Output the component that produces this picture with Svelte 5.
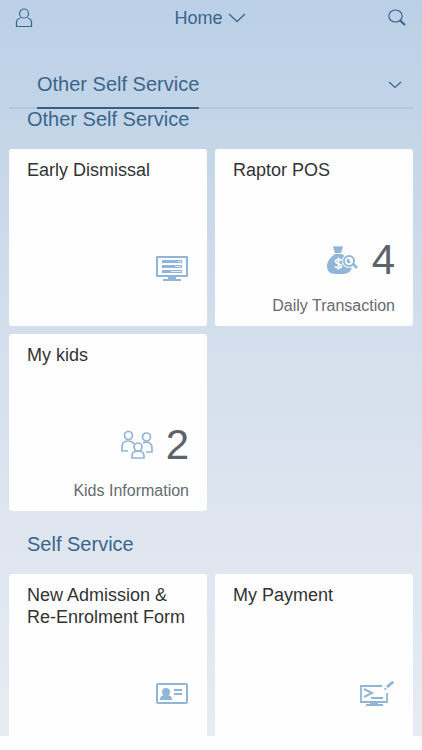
<script>
  const groups = [
    {
      title: 'Other Self Service',
      tiles: [
        { title: 'Early Dismissal', icon: 'monitor' },
        { title: 'Raptor POS', icon: 'money', count: 4, footer: 'Daily Transaction' },
        { title: 'My kids', icon: 'group', count: 2, footer: 'Kids Information' }
      ]
    },
    {
      title: 'Self Service',
      tiles: [
        { title: 'New Admission & Re-Enrolment Form', icon: 'card' },
        { title: 'My Payment', icon: 'terminal' }
      ]
    }
  ];
</script>

{#snippet icon(name)}
  {#if name === 'monitor'}
    <svg class="icon" width="34" height="28" viewBox="0 0 34 28" aria-hidden="true">
      <rect x="2" y="2" width="30" height="19" fill="none" stroke="currentColor" stroke-width="2" />
      <path d="M7 5h20v3H7zM7 10h20v3H7zM7 15h20v3H7zM13 22h8v2h5v2H8v-2h5z" fill="currentColor" />
      <path d="M23 6.5h3M20 11.500h6M16 16.500h10" stroke="#e4eef7" stroke-width="1" />
    </svg>
  {:else if name === 'money'}
    <svg class="icon" width="34" height="30" viewBox="0 0 34 30" aria-hidden="true">
      <path d="M8 1q2 1 4 0 2 1 4 0l1 1-2 6H9L7 2zM9 9h7c4 3 10 7 10 12 0 5-4 8-9 8H9c-5 0-8-3-8-8 0-5 4-9 8-12z" fill="currentColor" />
      <path d="M15.500 15.500c-1-1.500-6-1.500-6 1 0 3 6 1.500 6 4.500 0 2.500-5 2.500-6.500.5M12.500 12.500v12" fill="none" stroke="#fff" stroke-width="1.700" />
      <circle cx="23" cy="16" r="7" fill="#fff" />
      <circle cx="23" cy="16" r="5" fill="#fff" stroke="currentColor" stroke-width="2" />
      <path d="M27 19l4 4" stroke="currentColor" stroke-width="2.500" />
      <path d="M20.500 16a2.500 2.500 0 0 1 3-2.500l-.5 2 2 1.500a2.500 2.500 0 0 1-4 .5" fill="currentColor" />
    </svg>
  {:else if name === 'group'}
    <svg class="icon" width="34" height="30" viewBox="0 0 34 30" aria-hidden="true">
      <g fill="none" stroke="currentColor" stroke-width="1.700">
        <circle cx="8.500" cy="5.500" r="4" />
        <circle cx="26.500" cy="7" r="4" />
        <circle cx="18" cy="17" r="4" />
        <path d="M8 21H2v-4c0-4 2-6 6-6 3 0 5 1 6 3M23 13c5-2 9 0 9 5v4h-6M12 28v-2c0-3 2-5 6-5s6 2 6 5v2z" />
      </g>
    </svg>
  {:else if name === 'card'}
    <svg class="icon" width="34" height="24" viewBox="0 0 34 24" aria-hidden="true">
      <rect x="2" y="2" width="30" height="19" rx="1" fill="none" stroke="currentColor" stroke-width="2" />
      <circle cx="11" cy="10" r="4" fill="currentColor" />
      <path d="M5 18v-1q0-3 4-4h4q4 1 4 4v1zM19 7h8v2h-8zM19 11h8v2h-8z" fill="currentColor" />
    </svg>
  {:else}
    <svg class="icon" width="36" height="28" viewBox="0 0 36 28" aria-hidden="true">
      <path d="M23 6H2v16h26V13" fill="none" stroke="currentColor" stroke-width="1.800" />
      <path d="M5 9l8 4-8 4M12 18h12" fill="none" stroke="currentColor" stroke-width="2" />
      <path d="M11 23h8v1h5v2H7v-2h4zM25 9.500l1-2 2 1.500-2 1zM27 6l6-5q2 0 2 2l-6 5z" fill="currentColor" />
    </svg>
  {/if}
{/snippet}

<main>
  <header>
    <button aria-label="User menu">
      <svg width="18" height="20" viewBox="0 0 18 20" fill="none" stroke="currentColor" stroke-width="1.200" aria-hidden="true">
        <circle cx="9" cy="5.500" r="4.500" />
        <path d="M5.500 10C3 10.500 1.500 12 1.500 14.500V18.500h15v-4C16.500 12 15 10.500 12.500 10" />
      </svg>
    </button>
    <button class="home">
      <span>Home</span>
      <svg width="18" height="10" viewBox="0 0 18 10" fill="none" stroke="currentColor" stroke-width="1.300" aria-hidden="true"><path d="M1 1l8 7.500L17 1" /></svg>
    </button>
    <button aria-label="Search">
      <svg width="20" height="18" viewBox="0 0 20 18" fill="none" stroke="currentColor" aria-hidden="true">
        <ellipse cx="8.500" cy="7" rx="6.700" ry="6" stroke-width="1.200" />
        <path d="M12.500 11l5.500 5" stroke-width="2.200" />
      </svg>
    </button>
  </header>

  <nav>
    <a class="tab" href="#group-0" aria-current="true">Other Self Service</a>
    <button aria-label="More groups">
      <svg width="14" height="8" viewBox="0 0 14 8" fill="none" stroke="currentColor" stroke-width="1.200" aria-hidden="true"><path d="M1 1l6 5.500L13 1" /></svg>
    </button>
  </nav>

  {#each groups as group, i}
    <section id="group-{i}">
      <h2>{group.title}</h2>
      <div class="tiles">
        {#each group.tiles as tile}
          <a class="tile" href="#group-{i}">
            <h3>{tile.title}</h3>
            <div class="value" class:plain={!tile.count}>
              {@render icon(tile.icon)}
              {#if tile.count}<span class="count">{tile.count}</span>{/if}
            </div>
            {#if tile.footer}<p>{tile.footer}</p>{/if}
          </a>
        {/each}
      </div>
    </section>
  {/each}
</main>

<style>
  :global(body) {
    background: #fefefe;
  }
  main {
    height: calc(100vh - 14px);
    overflow: hidden;
    box-sizing: border-box;
    padding: 0 9px;
    background: linear-gradient(#bbd0e7, #c5d6e8 20%, #d5e0ed 50%, #dfe6f0 75%, #e7ecf2);
    color: #3b658b;
    font-family: "Liberation Sans", Arial, sans-serif;
  }
  button {
    display: flex;
    align-items: center;
    padding: 0;
    border: 0;
    background: none;
    color: inherit;
    font: inherit;
  }
  svg {
    display: block;
    flex: none;
  }
  header {
    display: flex;
    align-items: center;
    justify-content: space-between;
    height: 36px;
    padding: 0 6px;
    font-size: 18px;
  }
  .home {
    gap: 5px;
  }
  nav {
    display: flex;
    align-items: stretch;
    justify-content: space-between;
    height: 49px;
    margin-top: 24px;
    padding: 0 11px 0 28px;
    background: linear-gradient(#b3c7de, #b3c7de) bottom / 100% 2px no-repeat;
  }
  .tab {
    box-sizing: border-box;
    border-bottom: 2px solid #346187;
    color: inherit;
    font-size: 20px;
    line-height: 48px;
    text-decoration: none;
  }
  h2 {
    margin: 0;
    padding: 0 18px;
    font-size: 20px;
    font-weight: 400;
    line-height: 20px;
  }
  section + section h2 {
    padding-top: 23px;
  }
  .tiles {
    display: grid;
    grid-template-columns: 1fr 1fr;
    gap: 8px;
    padding-top: 20px;
  }
  .tile {
    display: flex;
    flex-direction: column;
    box-sizing: border-box;
    height: 177px;
    padding: 10px 18px;
    border-radius: 3px;
    background: #fefefe;
    color: #333;
    text-decoration: none;
  }
  h3 {
    height: 66px;
    margin: 0;
    font-size: 18px;
    font-weight: 400;
    line-height: 22px;
  }
  .value {
    display: flex;
    align-items: center;
    justify-content: flex-end;
    gap: 12px;
    height: 74px;
  }
  .plain {
    height: 88px;
  }
  .icon {
    color: #91b5d8;
  }
  .count {
    color: #5b6369;
    font-size: 42px;
    line-height: 42px;
  }
  p {
    margin: 0;
    color: #666b70;
    font-size: 16px;
    line-height: 20px;
    text-align: right;
    white-space: nowrap;
  }
</style>
